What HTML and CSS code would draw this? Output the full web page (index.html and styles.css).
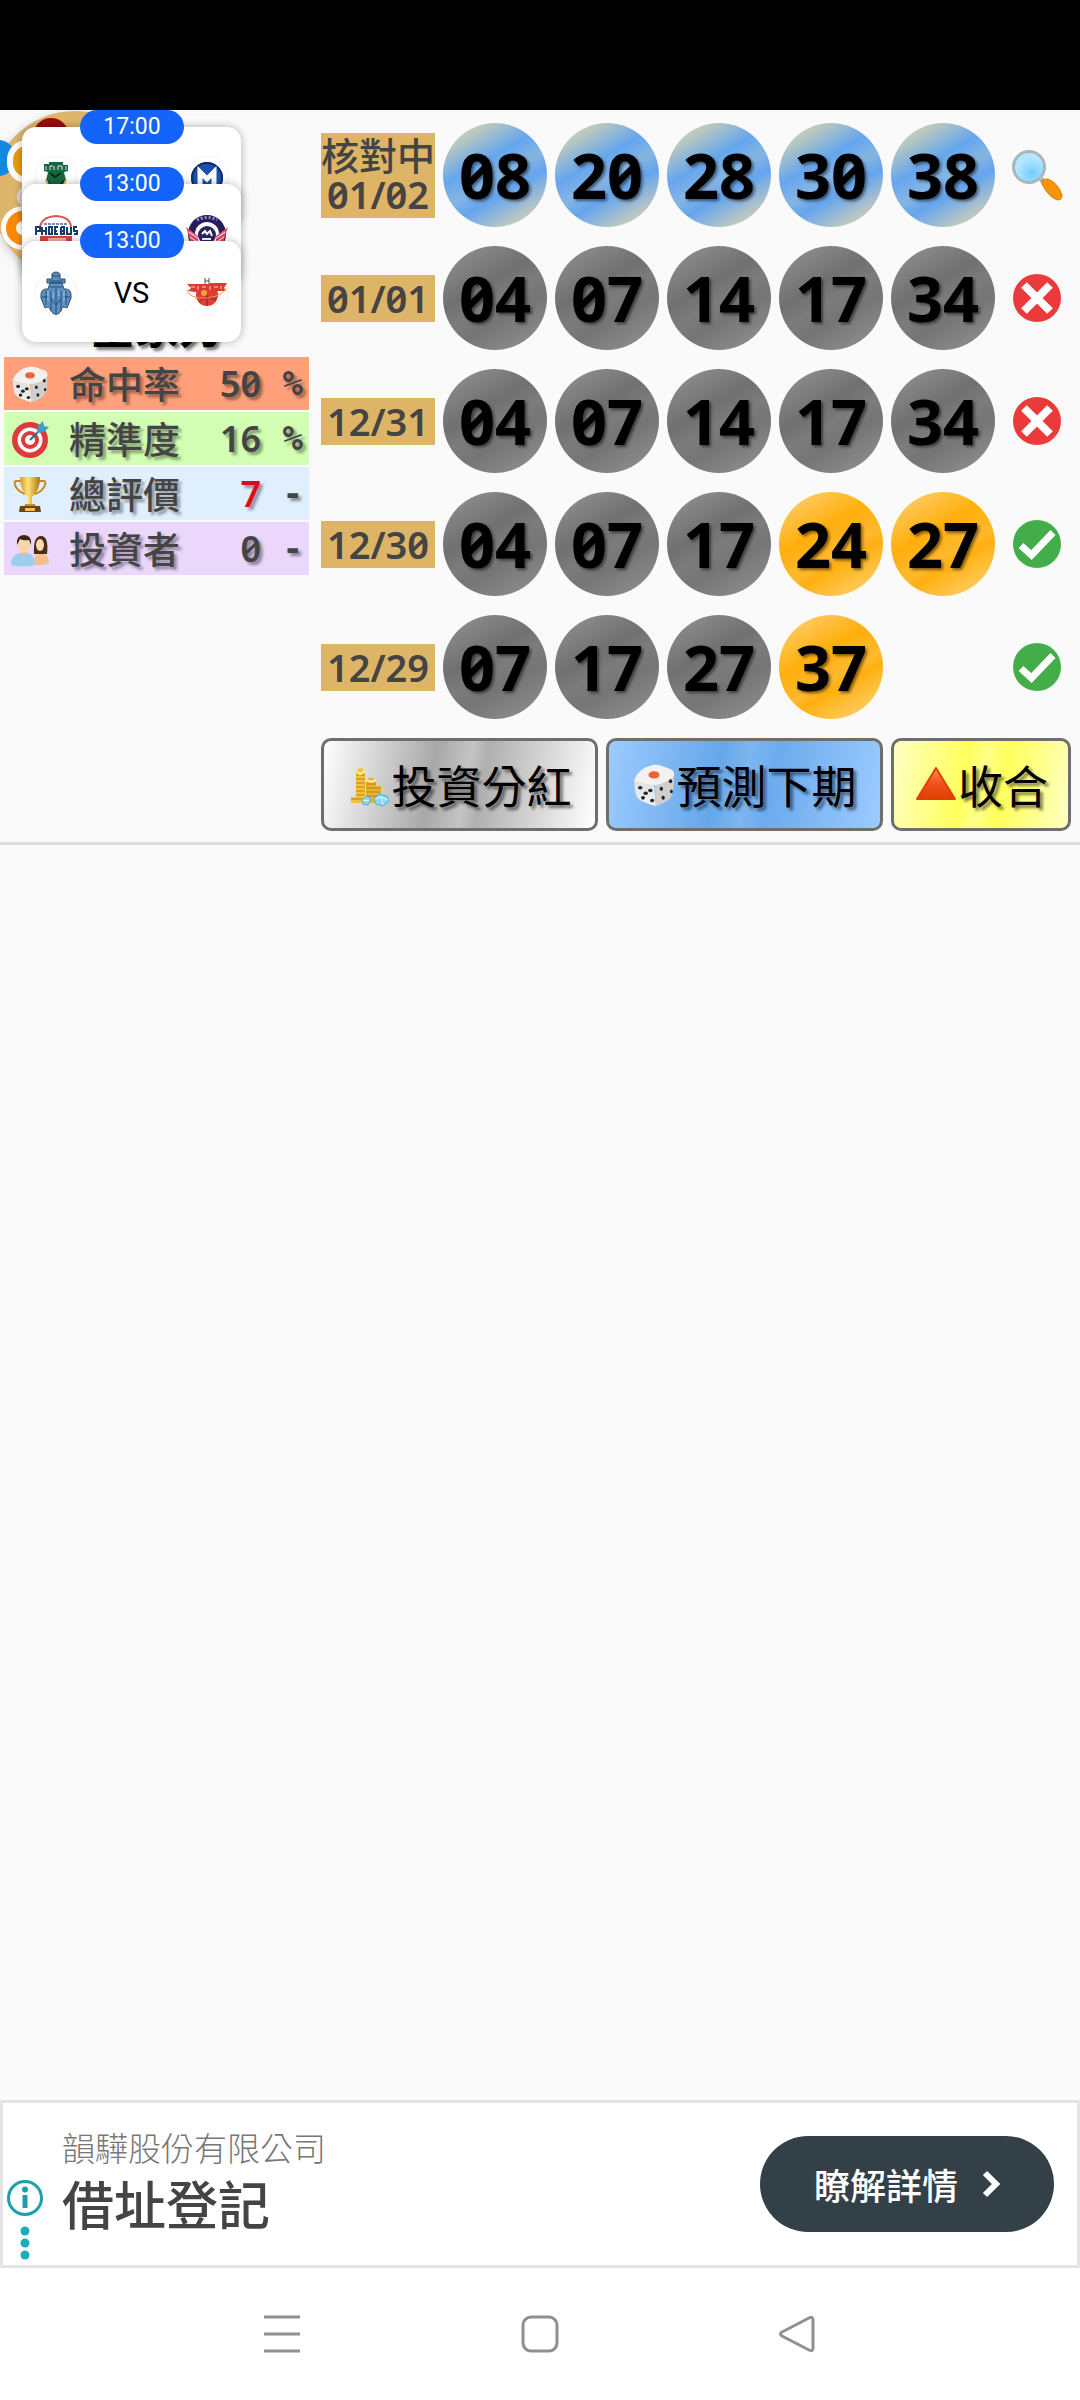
FILE: index.html
```html
<!DOCTYPE html>
<html lang="zh-Hant">
<head>
    <meta charset="UTF-8">
    <meta name="viewport" content="width=device-width, initial-scale=1.0">
    <title>預測紀錄</title>
    <link rel="stylesheet" href="styles.css">
</head>
<body>
    <!-- 共用圖示 -->
    <svg class="defs" aria-hidden="true">
        <defs>
            <linearGradient id="gold" x1="0" x2="1">
                <stop offset="0" stop-color="#d99a1c"/>
                <stop offset="0.4" stop-color="#ffe27a"/>
                <stop offset="1" stop-color="#b8730c"/>
            </linearGradient>
            <linearGradient id="redTri" x1="0" y1="0" x2="0" y2="1">
                <stop offset="0" stop-color="#ff8a4a"/>
                <stop offset="0.5" stop-color="#f4511e"/>
                <stop offset="1" stop-color="#dd3f00"/>
            </linearGradient>
            <radialGradient id="lens" cx="0.6" cy="0.7">
                <stop offset="0" stop-color="#6fcdfb"/>
                <stop offset="1" stop-color="#b5e6fd"/>
            </radialGradient>
            <linearGradient id="dieLeft" x1="0" y1="0" x2="0" y2="1">
                <stop offset="0" stop-color="#dedede"/>
                <stop offset="1" stop-color="#f2f2f2"/>
            </linearGradient>
        </defs>
        <symbol id="dice" viewBox="0 0 48 48">
            <path d="M2 18 24 23 26 47Q10 43 6 38Q3 34 2 18Z" fill="url(#dieLeft)"/>
            <path d="M25 23 46 14Q46 32 42 38Q38 43 26 47Z" fill="#cfcfcf"/>
            <path d="M3 17Q8 6 20 3Q26 1 32 3L43 7Q48 11 45 15Q37 22 26 24Q12 23 3 19Z" fill="#f3f2f0"/>
            <ellipse cx="24" cy="13" rx="6" ry="4" fill="#e8643a"/>
            <g fill="#222">
                <ellipse cx="9" cy="27" rx="2.4" ry="2"/><ellipse cx="20" cy="30" rx="2.4" ry="2"/>
                <ellipse cx="15" cy="33" rx="2.4" ry="2"/><ellipse cx="12" cy="38" rx="2.2" ry="2"/>
                <ellipse cx="22" cy="41" rx="2.2" ry="2"/><ellipse cx="42" cy="20" rx="1.8" ry="2.2"/>
                <ellipse cx="32" cy="28" rx="1.8" ry="2.2"/><ellipse cx="43" cy="31" rx="1.5" ry="2"/>
                <ellipse cx="34" cy="38" rx="1.8" ry="2.2"/>
            </g>
        </symbol>
        <symbol id="cross" viewBox="0 0 48 48">
            <circle cx="24" cy="24" r="24" fill="#ea3a3c"/>
            <path d="m11 11 26 26M37 11 11 37" stroke="#fff" stroke-width="8"/>
        </symbol>
        <symbol id="check" viewBox="0 0 48 48">
            <circle cx="24" cy="24" r="24" fill="#43ae49"/>
            <path d="M8 25.500 18.500 35 40 12.500" fill="none" stroke="#fff" stroke-width="7"/>
        </symbol>
    </svg>

    <div class="status-bar"></div>

    <main>
        <section class="board">
            <div class="profile">
                <div class="avatar">
                    <svg viewBox="0 0 190 180" aria-hidden="true">
                        <circle cx="75" cy="85" r="84" fill="#deb66b"/>
                        <circle cx="51" cy="26" r="18" fill="#9c0b0b"/>
                        <circle cx="-2" cy="48" r="18" fill="#1389df"/>
                        <rect x="10" y="33" width="40" height="37" rx="17" fill="#ef9a0c" stroke="#fff" stroke-width="6"/>
                        <circle cx="28" cy="87" r="11" fill="#e6e2e6"/>
                        <circle cx="23" cy="118" r="22" fill="#fff"/>
                        <circle cx="23" cy="118" r="12" fill="#fff" stroke="#ff8a00" stroke-width="10"/>
                    </svg>
                </div>
                <h1>全家力</h1>
                <table class="stats">
                    <tr class="hit">
                        <td class="icon"><svg aria-hidden="true"><use href="#dice"/></svg></td>
                        <th scope="row">命中率</th>
                        <td class="value">50</td>
                        <td class="unit">%</td>
                    </tr>
                    <tr class="accuracy">
                        <td class="icon">
                            <svg viewBox="0 0 38 38" aria-hidden="true">
                                <circle cx="19" cy="20" r="18" fill="#dd3b3b"/>
                                <circle cx="19" cy="20" r="12.500" fill="#fff"/>
                                <circle cx="19" cy="20" r="9" fill="#dd3b3b"/>
                                <circle cx="19" cy="20" r="5" fill="#fff"/>
                                <path d="m19 20 13-13" stroke="#1d6f96" stroke-width="2"/>
                                <path d="m26 13 1-7 5-5 1 5 5 1-5 5Z" fill="#3d9cc8"/>
                            </svg>
                        </td>
                        <th scope="row">精準度</th>
                        <td class="value">16</td>
                        <td class="unit">%</td>
                    </tr>
                    <tr class="rating">
                        <td class="icon">
                            <svg viewBox="0 0 38 38" aria-hidden="true">
                                <path d="M10 6H5Q3 6 4 10Q6 16 14 19M28 6H33Q35 6 34 10Q32 16 24 19" fill="none" stroke="#c68a1a" stroke-width="2"/>
                                <path d="M9 2H29Q29 16 21 22V30H17V22Q9 16 9 2Z" fill="url(#gold)"/>
                                <path d="M14 29H24L25 32H13Z" fill="#c98f20"/>
                                <path d="M9 31H29L30 37H8Z" fill="#6f4113"/>
                                <path d="M14 33H24V36H14Z" fill="#f2c24e"/>
                            </svg>
                        </td>
                        <th scope="row">總評價</th>
                        <td class="value high">7</td>
                        <td class="unit">-</td>
                    </tr>
                    <tr class="investors">
                        <td class="icon">
                            <svg viewBox="0 0 38 38" aria-hidden="true">
                                <path d="M23 24Q22 6 30 6Q38 6 36 24Z" fill="#4b2a17"/>
                                <path d="M22 35Q22 25 28 24H33Q38 26 38 33Q34 36 22 35Z" fill="#f7bf8d"/>
                                <ellipse cx="29" cy="15" rx="4" ry="6" fill="#fbd9ae"/>
                                <path d="M0 35Q0 25 9 23H17Q24 25 24 35Q12 38 0 35Z" fill="#9fcdf0"/>
                                <path d="M10 20H16V24L13 26 10 24Z" fill="#eebb86"/>
                                <ellipse cx="13" cy="15" rx="6" ry="8" fill="#fbd6a6"/>
                                <path d="M6 15Q5 5 13 5Q21 5 20 15L18 10Q12 11 9 9Z" fill="#3c2416"/>
                            </svg>
                        </td>
                        <th scope="row">投資者</th>
                        <td class="value">0</td>
                        <td class="unit">-</td>
                    </tr>
                </table>
            </div>

            <div class="results">
                <div class="draw checking">
                    <div class="date"><span>核對中</span>01/02</div>
                    <div class="ball">08</div>
                    <div class="ball">20</div>
                    <div class="ball">28</div>
                    <div class="ball">30</div>
                    <div class="ball">38</div>
                    <svg class="mark wide" viewBox="0 0 52 52" role="img" aria-label="核對中">
                        <path d="m30 30 5 5" stroke="#a4a9ad" stroke-width="5"/>
                        <path d="M31 35Q30 30 37 30Q47 34 51 46Q51 51 47 51Q38 49 31 35Z" fill="#fb9404" stroke="#d87a00" stroke-width="1"/>
                        <circle cx="18" cy="18" r="15.500" fill="url(#lens)" stroke="#a9b7c0" stroke-width="3"/>
                    </svg>
                </div>
                <div class="draw">
                    <div class="date">01/01</div>
                    <div class="ball">04</div>
                    <div class="ball">07</div>
                    <div class="ball">14</div>
                    <div class="ball">17</div>
                    <div class="ball">34</div>
                    <svg class="mark" role="img" aria-label="未中"><use href="#cross"/></svg>
                </div>
                <div class="draw">
                    <div class="date">12/31</div>
                    <div class="ball">04</div>
                    <div class="ball">07</div>
                    <div class="ball">14</div>
                    <div class="ball">17</div>
                    <div class="ball">34</div>
                    <svg class="mark" role="img" aria-label="未中"><use href="#cross"/></svg>
                </div>
                <div class="draw">
                    <div class="date">12/30</div>
                    <div class="ball">04</div>
                    <div class="ball">07</div>
                    <div class="ball">17</div>
                    <div class="ball won">24</div>
                    <div class="ball won">27</div>
                    <svg class="mark" role="img" aria-label="中獎"><use href="#check"/></svg>
                </div>
                <div class="draw">
                    <div class="date">12/29</div>
                    <div class="ball">07</div>
                    <div class="ball">17</div>
                    <div class="ball">27</div>
                    <div class="ball won">37</div>
                    <svg class="mark" role="img" aria-label="中獎"><use href="#check"/></svg>
                </div>

                <div class="actions">
                    <button class="silver" type="button">
                        <svg viewBox="0 0 44 44" aria-hidden="true">
                            <path d="M4 40V34H9V8Q13 2 18 8V40Z" fill="#f3c23c"/>
                            <path d="M19 40V17Q24 12 29 17V23H34V40Z" fill="#e9b22f"/>
                            <path d="M9 12H18M9 16H18M9 20H18M9 24H18M9 28H18M9 32H18M4 36H18M19 21H29M19 25H34M19 29H34M19 33H34" stroke="#b8821a" stroke-width="1"/>
                            <path d="m9 8 4 3 5-3M19 17l5 2 5-2" fill="none" stroke="#fff0a3" stroke-width="2"/>
                            <path d="m15 37 5-4 4 3-3 6-5-1ZM27 36l5-5 8 2 2 5-6 5-7-2Z" fill="#8fd6f6" stroke="#4faed8" stroke-width="1"/>
                            <path d="m28 36 6-2 7 3M34 34l2 8M16 37l6 1" stroke="#e8faff" fill="none"/>
                        </svg>投資分紅</button>
                    <button class="blue" type="button"><svg aria-hidden="true"><use href="#dice"/></svg>預測下期</button>
                    <button class="yellow" type="button">
                        <svg viewBox="0 0 44 44" aria-hidden="true">
                            <path d="M22 5 41 36H3Z" fill="url(#redTri)" stroke="#d94208" stroke-width="2" stroke-linejoin="round"/>
                        </svg>收合</button>
                </div>
            </div>

            <!-- 浮動賽事卡 -->
            <aside class="matches">
                <div class="match">
                    <time>17:00</time>
                    <div class="teams">
                        <svg viewBox="0 0 44 44" aria-hidden="true">
                            <circle cx="22" cy="22" r="21" fill="#fff" stroke="#f3f3f3"/>
                            <path d="M15 7H29V10H34V16L30 17 32 25 27 34H17L12 25 14 17 10 16V9H15Z" fill="#15693f"/>
                            <path d="M12 11V15M16 11V15M20 11V15M24 11V15M28 11V15M32 11V15M16 11H19M24 11H28" stroke="#d8e6dd" stroke-width="1"/>
                            <path d="m16 18 5 4 6-4M12 25l4 4M31 25l-4 4" stroke="#082d1a" stroke-width="2" fill="none"/>
                            <path d="m14 29-2-4M30 29l2-4" stroke="#e3b34b" stroke-width="2"/>
                        </svg>
                        <svg viewBox="0 0 44 44" aria-hidden="true">
                            <circle cx="22" cy="22" r="21" fill="#fff" stroke="#f3f3f3"/>
                            <circle cx="22" cy="23" r="16" fill="#1d4fae"/>
                            <circle cx="22" cy="23" r="15" fill="none" stroke="#0d2d68" stroke-width="2"/>
                            <path d="M15 36V17L22 24 29 17V36" fill="none" stroke="#fff" stroke-width="5"/>
                        </svg>
                    </div>
                </div>
                <div class="match">
                    <time>13:00</time>
                    <div class="teams">
                        <svg viewBox="0 0 44 44" aria-hidden="true">
                            <path d="M6 16Q7 5 22 4Q37 5 37 16" fill="#fff" stroke="#d65b58" stroke-width="2"/>
                            <path d="M10 12H34" stroke="#7590b8" stroke-width="2" stroke-dasharray="3 1"/>
                            <path d="M6 24H38V40H6Z" fill="#d8453f"/>
                            <path d="M2 23V15H6V19H2M8 15V23M12 15V23M8 19H12M15 15H18V22H15ZM24 15H21V22H24M21 19H23M27 15V22H30V19H27H30V15H27M33 15V22H37V15M43 15H40V19H43V22H40" fill="none" stroke="#183b70" stroke-width="2"/>
                            <path d="M14 26H32V32H14Z" fill="#f6b1a9"/>
                        </svg>
                        <svg viewBox="0 0 44 44" aria-hidden="true">
                            <circle cx="22" cy="22" r="19" fill="#261e5c"/>
                            <circle cx="22" cy="22" r="12" fill="#fff"/>
                            <circle cx="22" cy="23" r="9" fill="#2a2361"/>
                            <path d="M1 15 13 24V34L6 31ZM43 15 31 24V34L38 31Z" fill="#e8486d"/>
                            <path d="M4 20 14 27M5 25 14 31M40 20 30 27M39 25 30 31" stroke="#fff"/>
                            <path d="M12 8q10-5 20 0" fill="none" stroke="#9a91c6" stroke-width="3" stroke-dasharray="2 2"/>
                            <path d="m17 22 3-3 2 3 3-3 2 5M17 27h9" stroke="#fff" fill="none" stroke-width="2"/>
                        </svg>
                    </div>
                </div>
                <div class="match">
                    <time>13:00</time>
                    <div class="teams">
                        <svg viewBox="0 0 44 44" aria-hidden="true">
                            <circle cx="22" cy="22" r="21" fill="#fff" stroke="#f3f3f3"/>
                            <path d="M18 3Q22-1 26 3V8H31V12H13V8H18ZM16 12H28L30 18Q38 17 37 27L33 37Q28 34 27 40Q22 47 17 40Q15 34 11 37L7 27Q6 17 14 18Z" fill="#5d91c4" stroke="#294b70" stroke-width="1"/>
                            <path d="M18 5H26M15 10H29M16 16H28M22 17V42M12 20V34M32 20V34M17 20V39M27 20V39M8 26H15M29 26H36M17 28l5 6 5-6" fill="none" stroke="#294b70" stroke-width="1"/>
                            <path d="M14 20v10M25 20v5M19 21v6M30 20v10" stroke="#9fc4e4"/>
                        </svg>
                        <span>VS</span>
                        <svg viewBox="0 0 44 44" aria-hidden="true">
                            <circle cx="22" cy="22" r="21" fill="#fff" stroke="#f3f3f3"/>
                            <path d="M20 7v7M24 7v7M20 10h4" stroke="#555"/>
                            <circle cx="22" cy="24" r="11" fill="#dc3d35"/>
                            <path d="M14 31q8-8 17-2M22 24v11" fill="none" stroke="#8b1d1b"/>
                            <path d="M2 13H20L22 15 25 12H42L39 17 41 20H33L29 22 22 20 10 21 3 20 6 17Z" fill="#d93c34"/>
                            <path d="M6 16h4M13 15v4M17 16h4M25 15v4M29 16h4M36 15v3" stroke="#f6d3a0"/>
                            <path d="M2 19Q4 28 22 27Q38 25 41 17" fill="none" stroke="#d9a441" stroke-width="1"/>
                            <circle cx="19" cy="22" r="3" fill="#f0a23a"/>
                        </svg>
                    </div>
                </div>
            </aside>
        </section>
    </main>

    <!-- 廣告 -->
    <section class="ad">
        <div class="ad-info">
            <svg viewBox="0 0 36 80" role="img" aria-label="廣告選項">
                <circle cx="18" cy="18" r="16.500" fill="none" stroke="#1aa0ae" stroke-width="3"/>
                <circle cx="18" cy="9.500" r="3" fill="#1aa0ae"/>
                <path d="M18 15V28" stroke="#1aa0ae" stroke-width="5"/>
                <circle cx="18" cy="51" r="4.500" fill="#1aaebb"/>
                <circle cx="18" cy="63" r="4.500" fill="#1aaebb"/>
                <circle cx="18" cy="75" r="4.500" fill="#1aaebb"/>
            </svg>
        </div>
        <div class="ad-text">
            <p>韻驊股份有限公司</p>
            <h2>借址登記</h2>
        </div>
        <a class="ad-link" href="#">瞭解詳情
            <svg viewBox="0 0 20 28" aria-hidden="true">
                <path d="m3 3 11 11L3 25" fill="none" stroke="#fff" stroke-width="6"/>
            </svg>
        </a>
    </section>

    <nav class="system-nav">
        <button type="button" aria-label="最近">
            <svg viewBox="0 0 48 48"><path d="M6 7H42M6 24H42M6 41H42"/></svg>
        </button>
        <button type="button" aria-label="首頁">
            <svg viewBox="0 0 48 48"><rect x="7" y="7" width="34" height="34" rx="8"/></svg>
        </button>
        <button type="button" aria-label="返回">
            <svg viewBox="0 0 48 48"><path d="M8 22 35 8Q39 6 39 10V38Q39 42 35 40L8 26Q5 24 8 22Z"/></svg>
        </button>
    </nav>
</body>
</html>
```

FILE: styles.css
```css
* {
    box-sizing: border-box;
}

body {
    margin: 0;
    min-height: 100vh;
    display: flex;
    flex-direction: column;
    background-color: #fafafa;
    color: #444;
    font-family: "Noto Sans CJK TC", sans-serif;
}

.defs {
    position: absolute;
    width: 0;
    height: 0;
}

.status-bar {
    height: 110px;
    background-color: #000;
}

main {
    flex: 1;
}

.board {
    position: relative;
    display: grid;
    grid-template-columns: 305px 1fr;
    gap: 12px;
    padding: 0 9px 11px 4px;
    border-bottom: 3px solid #ddd;
    overflow: hidden;
}

/* 左側：作者 */
.avatar {
    height: 185px;
    margin-left: -4px;
}

.avatar svg {
    width: 190px;
    height: 180px;
    filter: drop-shadow(4px 4px 6px rgba(0, 0, 0, 0.3));
}

h1 {
    margin: 0;
    font-size: 44px;
    line-height: 60px;
    text-align: center;
    color: #000;
    text-shadow: 3px 3px 3px rgba(0, 0, 0, 0.5);
}

.stats {
    width: 100%;
    border-spacing: 0 2px;
    font-size: 37px;
    line-height: 53px;
    text-shadow: 3px 3px 3px rgba(0, 0, 0, 0.4);
}

.stats td,
.stats th {
    padding: 0;
    height: 53px;
}

.stats .icon {
    width: 65px;
    padding-left: 6px;
}

.stats .icon svg {
    display: block;
    width: 40px;
    height: 38px;
}

.stats th {
    font-weight: 500;
    text-align: left;
}

.stats .value {
    font-family: "Noto Sans", sans-serif;
    font-feature-settings: "zero";
    font-weight: 600;
    font-size: 36px;
    text-align: right;
}

.stats .unit {
    width: 48px;
    padding-right: 6px;
    font-family: "DejaVu Sans Mono", monospace;
    font-weight: bold;
    font-size: 34px;
    text-align: right;
}

.stats .high {
    color: #dc0c18;
}

.hit {
    background-color: #ffa07a;
}

.accuracy {
    background-color: #d3ffb4;
}

.rating {
    background-color: #e0effd;
}

.investors {
    background-color: #ebd6fc;
}

/* 右側：開獎結果 */
.results {
    display: flex;
    flex-direction: column;
    gap: 19px;
    padding-top: 13px;
}

.draw {
    display: grid;
    grid-template-columns: 114fr repeat(5, 104fr) 68fr;
    gap: 8px;
    align-items: center;
}

.date {
    padding: 3px 0;
    background-color: #deb566;
    font-family: "Noto Sans", "Noto Sans CJK TC", sans-serif;
    font-feature-settings: "zero";
    font-weight: 600;
    font-size: 38px;
    line-height: 41px;
    text-align: center;
    white-space: nowrap;
}

.date span {
    display: block;
    font-weight: 500;
    font-size: 38px;
    line-height: 38px;
}

.ball {
    display: flex;
    align-items: center;
    justify-content: center;
    aspect-ratio: 1;
    border-radius: 50%;
    background: linear-gradient(150deg, #909090 5%, #707070 38%, #7c7c7c 52%, #757575 65%, #909090 95%);
    color: #000;
    font-family: "Noto Sans", sans-serif;
    font-feature-settings: "zero";
    font-weight: bold;
    font-size: 63px;
    line-height: 60px;
    text-shadow: 2px 2px 3px rgba(0, 0, 0, 0.5);
}

.checking .ball {
    background: linear-gradient(150deg, #d9d6ac 8%, #66a6ee 38%, #86b5e3 52%, #65a5ee 64%, #d9d3b4 92%);
}

.ball.won {
    background: linear-gradient(150deg, #ffd070 5%, #ffaf0c 38%, #ffb92e 58%, #ffb010 65%, #ffd884);
}

.mark {
    grid-column: 7;
    justify-self: center;
    width: 48px;
    height: 48px;
}

.mark.wide {
    width: 52px;
    height: 52px;
}

.actions {
    display: grid;
    grid-template-columns: 277fr 277fr 180fr;
    gap: 8px;
}

.actions button {
    display: flex;
    align-items: center;
    justify-content: center;
    height: 93px;
    padding: 0;
    border: 3px solid #6e6e6e;
    border-radius: 10px;
    color: #000;
    font-family: inherit;
    font-size: 45px;
    line-height: 60px;
    text-shadow: 3px 3px 3px rgba(0, 0, 0, 0.5);
    white-space: nowrap;
    cursor: pointer;
}

.actions svg {
    width: 44px;
    height: 44px;
}

.silver {
    background: linear-gradient(100deg, #fff, #a8a8a8 40%, #c4c4c4 52%, #b0b0b0 58%, #fff);
}

.blue {
    background: linear-gradient(100deg, #9ccbff, #66a7ea 40%, #7db6f0 50%, #6cabed 60%, #9ccbff);
}

.yellow {
    background: linear-gradient(100deg, #ffffc4, #ffff5c 40%, #ffff88 50%, #ffff5c 62%, #ffffc4);
}

/* 浮在作者區上的賽事卡 */
.matches {
    position: absolute;
    top: 0;
    left: 22px;
    width: 219px;
}

.match {
    position: relative;
    height: 101px;
    margin-top: 17px;
    padding-top: 28px;
    border-radius: 14px;
    background-color: #fff;
    box-shadow: 0 0 8px rgba(0, 0, 0, 0.3);
}

.match + .match {
    margin-top: -44px;
}

.match time {
    position: absolute;
    top: -17px;
    left: 58px;
    width: 104px;
    border-radius: 17px;
    background-color: #1463fb;
    color: #fff;
    font-family: Roboto, sans-serif;
    font-size: 23px;
    line-height: 34px;
    text-align: center;
}

.teams {
    display: flex;
    justify-content: space-between;
    align-items: center;
    padding: 0 12px;
    color: #000;
    font-family: Roboto, sans-serif;
    font-size: 29px;
    line-height: 48px;
}

.teams svg {
    width: 44px;
    height: 44px;
}

/* 廣告 */
.ad {
    display: flex;
    align-items: center;
    height: 168px;
    padding-right: 23px;
    border: 3px solid #e5e5e5;
    background-color: #fff;
}

.ad-info {
    align-self: flex-end;
    width: 59px;
    padding: 0 0 5px 4px;
}

.ad-info svg {
    display: block;
    width: 36px;
    height: 80px;
}

.ad-text {
    flex: 1;
    padding-bottom: 10px;
}

.ad-text p {
    margin: 0;
    color: #777;
    font-size: 33px;
    font-weight: 300;
    line-height: 48px;
}

.ad-text h2 {
    margin: 0;
    font-size: 52px;
    font-weight: 500;
    line-height: 64px;
}

.ad-link {
    display: flex;
    align-items: center;
    gap: 24px;
    height: 96px;
    padding: 0 52px 0 54px;
    border-radius: 48px;
    background-color: #344048;
    color: #fff;
    font-size: 36px;
    font-weight: 500;
    text-decoration: none;
}

.ad-link svg {
    width: 20px;
    height: 28px;
}

/* 系統導覽列 */
.system-nav {
    display: flex;
    justify-content: center;
    gap: 210px;
    height: 132px;
    background-color: #fff;
}

.system-nav button {
    width: 48px;
    padding: 0;
    border: none;
    background: none;
}

.system-nav svg {
    display: block;
    width: 48px;
    height: 48px;
    fill: none;
    stroke: #909090;
    stroke-width: 3px;
}
```
